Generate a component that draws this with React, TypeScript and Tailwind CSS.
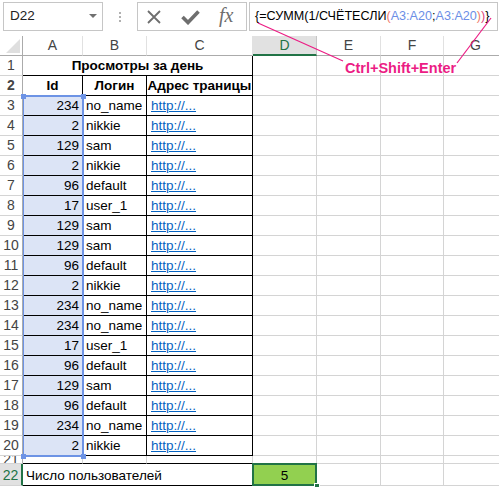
import React from "react";

// данные столбцов A и B (строки 3-20)
const DATA: [number, string][] = [
  [234, "no_name"],
  [2, "nikkie"],
  [129, "sam"],
  [2, "nikkie"],
  [96, "default"],
  [17, "user_1"],
  [129, "sam"],
  [129, "sam"],
  [96, "default"],
  [2, "nikkie"],
  [234, "no_name"],
  [234, "no_name"],
  [17, "user_1"],
  [96, "default"],
  [129, "sam"],
  [96, "default"],
  [234, "no_name"],
  [2, "nikkie"],
];

const GRID = "border-r border-b border-[#d4d4d4]";
const BLACK = "border-r border-b border-black";

function RowHead({
  n,
  h = "h-[20px]",
  lh = "leading-[19px]",
  active = false,
}: {
  n: number;
  h?: string;
  lh?: string;
  active?: boolean;
}) {
  return (
    <div
      className={`${h} w-[23px] shrink-0 flex items-end justify-center overflow-hidden border-b border-b-[#d4d4d4] text-[14px] ${lh} ${
        active ? "bg-[#e1e1e1] text-[#217346] border-r-2 border-r-[#217346]" : "text-[#444] border-r border-r-[#ababab]"
      }`}
    >
      {n}
    </div>
  );
}

function EmptyTail({ h = "h-[20px]" }: { h?: string }) {
  return (
    <>
      <div className={`${h} w-[64px] shrink-0 ${GRID}`} />
      <div className={`${h} w-[64px] shrink-0 ${GRID}`} />
      <div className={`${h} w-[63px] shrink-0 ${GRID}`} />
      <div className={`${h} w-[64px] shrink-0 ${GRID}`} />
    </>
  );
}

function FormulaBar() {
  return (
    <div className="h-[36px] flex items-start pt-[2px] pl-[3px]">
      <div className="w-[100px] h-[29px] border border-[#c6c6c6] flex items-center justify-between pl-[6px] pr-[5px]">
        <span className="text-[13.5px] text-[#222]">D22</span>
        <svg width="8" height="5" viewBox="0 0 8 5">
          <path d="M0 0 L8 0 L4 4 Z" fill="#707070" />
        </svg>
      </div>
      <div className="w-[34px] h-[29px] flex flex-col items-center justify-center gap-[2px]">
        <span className="w-[2px] h-[2px] bg-[#b0b0b0]" />
        <span className="w-[2px] h-[2px] bg-[#b0b0b0]" />
        <span className="w-[2px] h-[2px] bg-[#b0b0b0]" />
      </div>
      <div className="w-[110px] h-[29px] border border-[#c6c6c6] flex items-center pl-[8px] gap-[19px] text-[#6e6e6e]">
        <svg width="16" height="16" viewBox="0 0 16 16">
          <path d="M2 2 L14 14 M14 2 L2 14" stroke="#6e6e6e" strokeWidth="1.8" fill="none" />
        </svg>
        <svg width="19" height="16" viewBox="0 0 19 16">
          <path d="M1.5 8 L7 13.5 L17.5 2.5" stroke="#6e6e6e" strokeWidth="3.6" fill="none" />
        </svg>
        <span className="font-['Liberation_Serif',serif] italic text-[20px] leading-none -mt-[3px]">fx</span>
      </div>
      <div className="ml-[2px] w-[249px] h-[29px] border border-[#c6c6c6] flex items-center pl-[5px] text-[12.6px] text-black whitespace-nowrap">
        <span>{"{=СУММ(1/СЧЁТЕСЛИ"}</span>
        <span className="text-[#f07c6c]">(</span>
        <span className="text-[#6b8ee6]">A3:A20</span>
        <span>;</span>
        <span className="text-[#6b8ee6]">A3:A20</span>
        <span className="text-[#f07c6c]">)</span>
        <span className="text-[#e0457b]">)</span>
        <span>{"}"}</span>
      </div>
    </div>
  );
}

function ColumnHeader() {
  const plain =
    "h-[20px] shrink-0 flex items-center justify-center border-r border-r-[#e1e1e1] border-b border-b-[#ababab] text-[14px] text-[#444]";
  return (
    <div className="flex h-[20px]">
      <div className="h-[20px] w-[23px] shrink-0 relative border-r border-b border-[#ababab]">
        <svg className="absolute right-[2px] bottom-[2px]" width="14" height="14" viewBox="0 0 14 14">
          <path d="M14 0 L14 14 L0 14 Z" fill="#dfdfdf" />
        </svg>
      </div>
      <div className={`${plain} w-[60px]`}>A</div>
      <div className={`${plain} w-[64px]`}>B</div>
      <div className={`${plain} w-[106px]`}>C</div>
      <div className="h-[20px] w-[64px] shrink-0 flex items-center justify-center bg-[#e1e1e1] border-r border-r-[#c6c6c6] border-b-2 border-b-[#217346] text-[14px] text-[#217346]">
        D
      </div>
      <div className={`${plain} w-[64px]`}>E</div>
      <div className={`${plain} w-[63px]`}>F</div>
      <div className={`${plain} w-[64px]`}>G</div>
    </div>
  );
}

export default function App() {
  return (
    <div className="w-[499px] h-[487px] bg-white overflow-hidden relative font-['Liberation_Sans',Arial,sans-serif] text-black">
      <FormulaBar />

      <div className="relative w-[600px]">
        <ColumnHeader />

        {/* строка 1: объединённый заголовок */}
        <div className="flex h-[20px]">
          <RowHead n={1} />
          <div className={`h-[20px] w-[230px] shrink-0 ${BLACK} flex items-end justify-center font-bold text-[13.5px] leading-[19px]`}>
            Просмотры за день
          </div>
          <EmptyTail />
        </div>

        {/* строка 2: шапка таблицы */}
        <div className="flex h-[20px] text-[13.5px] leading-[19px] font-bold">
          <RowHead n={2} />
          <div className={`h-[20px] w-[60px] shrink-0 ${BLACK} flex items-end justify-center`}>Id</div>
          <div className={`h-[20px] w-[64px] shrink-0 ${BLACK} flex items-end justify-center`}>Логин</div>
          <div className={`h-[20px] w-[106px] shrink-0 ${BLACK} flex items-end justify-center whitespace-nowrap overflow-hidden`}>
            Адрес траницы
          </div>
          <EmptyTail />
        </div>

        {DATA.map(([id, login], i) => (
          <div key={i} className="flex h-[20px] text-[13.5px] leading-[19px]">
            <RowHead n={i + 3} />
            <div className={`h-[20px] w-[60px] shrink-0 ${BLACK} bg-[#dce4f6] flex items-end justify-end pr-[3px]`}>{id}</div>
            <div className={`h-[20px] w-[64px] shrink-0 ${BLACK} flex items-end pl-[3px]`}>{login}</div>
            <div className={`h-[20px] w-[106px] shrink-0 ${BLACK} flex items-end pl-[4px]`}>
              <span className="text-[#0563c1] underline">http://...</span>
            </div>
            <EmptyTail />
          </div>
        ))}

        {/* строка 21 почти скрыта */}
        <div className="flex h-[8px]">
          <RowHead n={21} h="h-[8px]" lh="leading-[7px]" />
          <div className="h-[8px] w-[60px] shrink-0 border-r border-r-[#d4d4d4] border-b border-b-black" />
          <div className="h-[8px] w-[64px] shrink-0 border-r border-r-[#d4d4d4] border-b border-b-black" />
          <div className="h-[8px] w-[106px] shrink-0 border-r border-r-[#d4d4d4] border-b border-b-black" />
          <EmptyTail h="h-[8px]" />
        </div>

        {/* строка 22: итог */}
        <div className="flex h-[22px] text-[13.5px] leading-[19px]">
          <RowHead n={22} h="h-[22px]" active />
          <div className={`h-[22px] w-[230px] shrink-0 ${BLACK} flex items-end pl-[3px]`}>Число пользователей</div>
          <div className={`h-[22px] w-[64px] shrink-0 ${GRID} bg-[#92d050] relative flex items-end justify-center`}>
            5
            <div className="absolute -left-[1px] -top-[1px] -right-[1px] -bottom-[1px] border-2 border-[#217346]" />
            <div className="absolute -right-[4px] -bottom-[4px] w-[6px] h-[6px] bg-[#217346] border border-white" />
          </div>
          <div className={`h-[22px] w-[64px] shrink-0 ${GRID}`} />
          <div className={`h-[22px] w-[63px] shrink-0 ${GRID}`} />
          <div className={`h-[22px] w-[64px] shrink-0 ${GRID}`} />
        </div>

        {/* рамка ссылки A3:A20 */}
        <div className="absolute left-[23px] top-[59px] w-[61px] h-[362px] border-t-2 border-r-2 border-b-2 border-l border-[#6d93e5] pointer-events-none">
          <div className="absolute -left-[3px] -top-[3px] w-[5px] h-[5px] bg-[#6d93e5]" />
          <div className="absolute -right-[4px] -top-[3px] w-[5px] h-[5px] bg-[#6d93e5]" />
          <div className="absolute -left-[3px] -bottom-[4px] w-[5px] h-[5px] bg-[#6d93e5]" />
          <div className="absolute -right-[4px] -bottom-[4px] w-[5px] h-[5px] bg-[#6d93e5]" />
        </div>
      </div>

      {/* аннотация */}
      <svg className="absolute left-0 top-0 pointer-events-none" width="499" height="487">
        <line x1="258" y1="23" x2="343" y2="61" stroke="#ec1c84" strokeWidth="1.2" />
        <line x1="491" y1="18" x2="457" y2="63" stroke="#ec1c84" strokeWidth="1.2" />
      </svg>
      <div className="absolute left-[345px] top-[61px] text-[14.5px] leading-none font-bold text-[#ec1c84] whitespace-nowrap">
        Ctrl+Shift+Enter
      </div>
    </div>
  );
}
